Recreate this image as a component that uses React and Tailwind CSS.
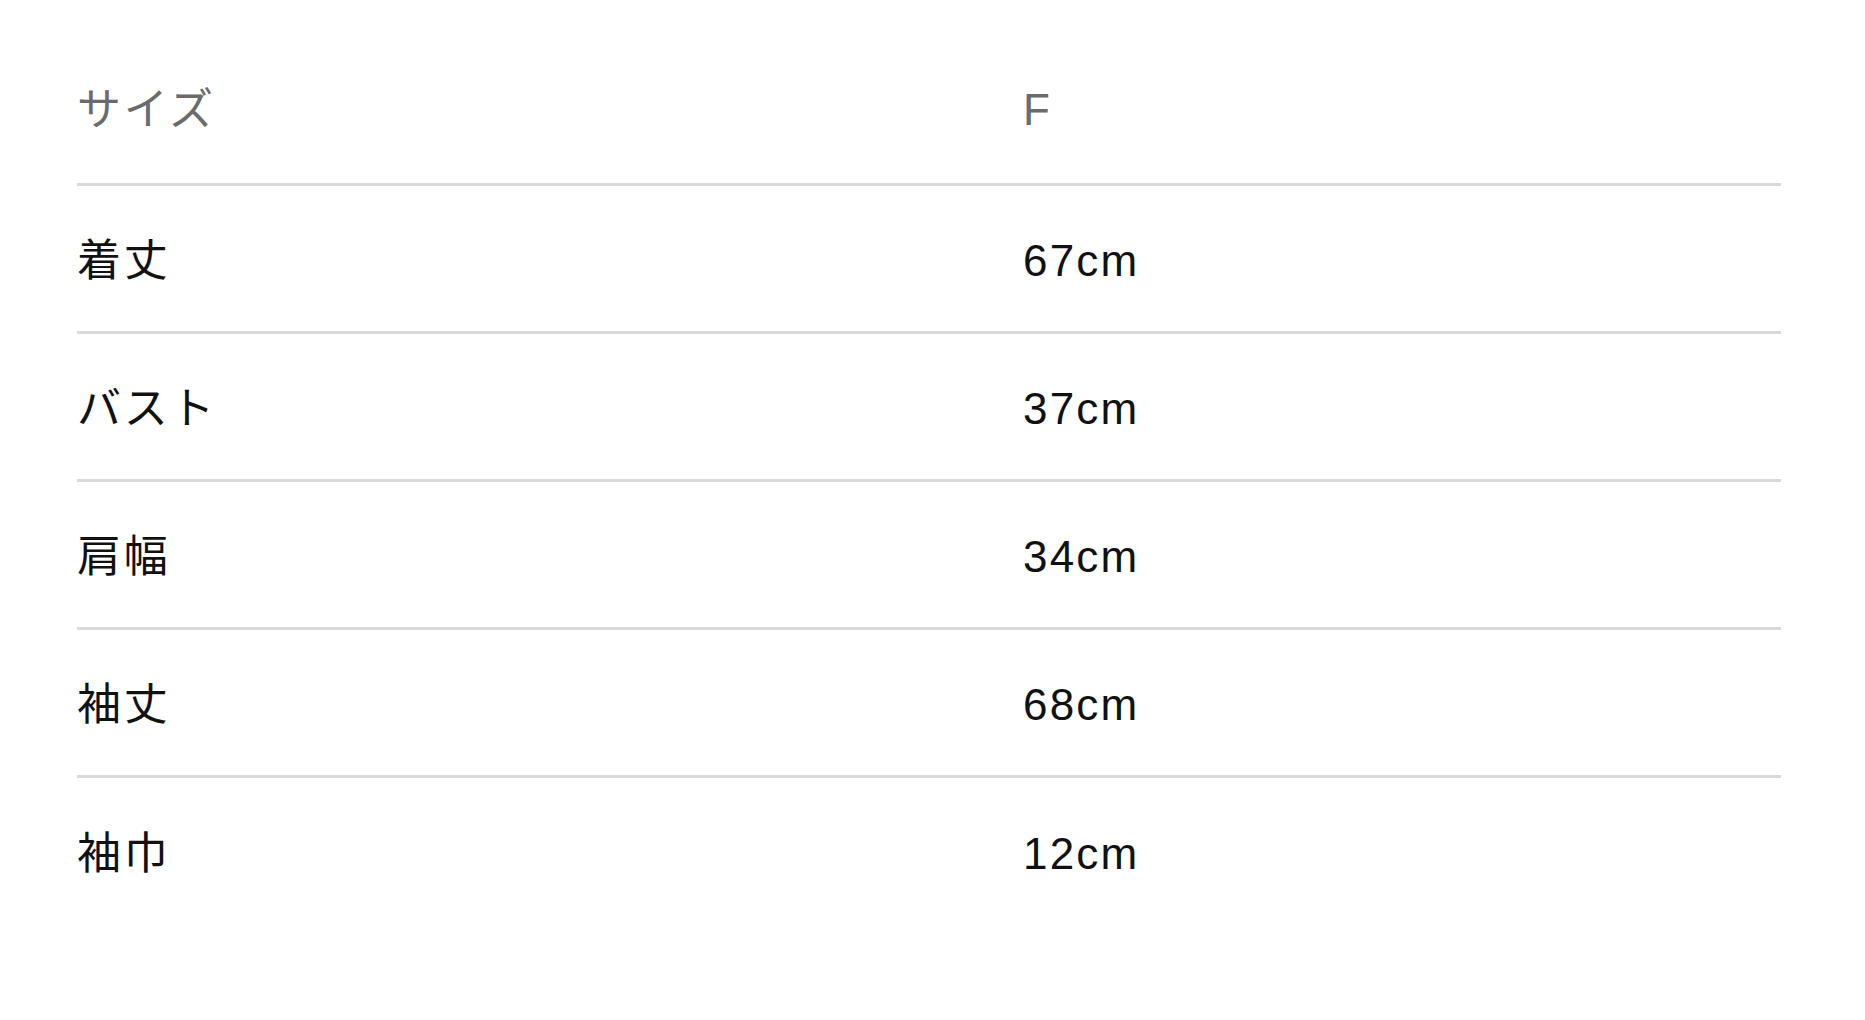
export default function App() {
  const rows = [
    { label: "着丈", value: "67cm" },
    { label: "バスト", value: "37cm" },
    { label: "肩幅", value: "34cm" },
    { label: "袖丈", value: "68cm" },
    { label: "袖巾", value: "12cm" },
  ];

  return (
    <div
      className="w-[1865px] h-[1020px] bg-white pl-[77px] pt-[38px]"
      style={{ fontFamily: '"Liberation Sans", "Noto Sans CJK JP", sans-serif' }}
    >
      <div className="w-[1704px]">
        {/* Header */}
        <div className="flex items-center h-[148px] pb-[2px] border-b-[3px] border-[#d9d9d9] text-[44px] text-[#6b6b6b]">
          <div className="w-[946px] tracking-[0.06em]">サイズ</div>
          <div className="tracking-[0.05em]">F</div>
        </div>

        {/* Size rows */}
        {rows.map((row, i) => (
          <div
            key={i}
            className={`flex items-center h-[148px] pt-[4px] text-[44px] text-[#111] ${
              i < rows.length - 1 ? "border-b-[3px] border-[#d9d9d9]" : ""
            }`}
          >
            <div className="w-[946px] tracking-[0.06em]">{row.label}</div>
            <div className="tracking-[0.05em]">{row.value}</div>
          </div>
        ))}
      </div>
    </div>
  );
}
